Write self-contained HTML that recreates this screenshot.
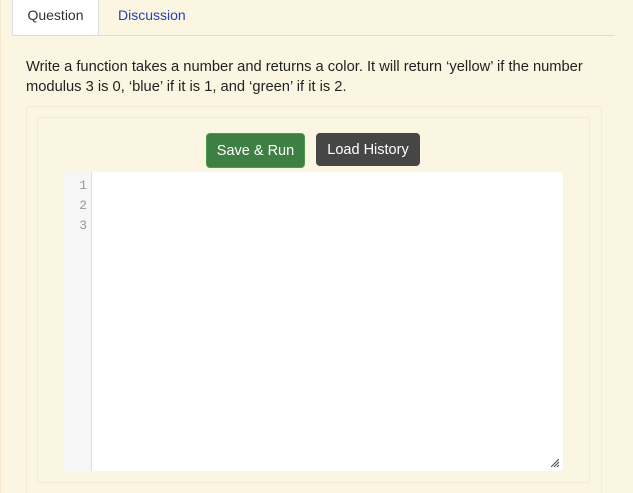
<!DOCTYPE html>
<html><head><style>
html,body{margin:0;width:633px;height:493px;overflow:hidden}
body{background:#fbf6e2;font-family:"Liberation Sans",sans-serif;position:relative}
.lb{position:absolute;left:0;top:0;width:1px;height:493px;background:#f5e8cc}
.tabline{position:absolute;left:12px;top:35px;width:603px;height:1px;background:#ddd}
.tab1{position:absolute;left:12px;top:0;width:85px;height:35px;background:#fff;border:1px solid #ddd;border-top:none;border-bottom:none;font-size:14px;color:#333;line-height:31px;text-align:center}
.tab2{position:absolute;left:118px;top:0;font-size:14px;color:#2a3fb0;line-height:31px}
.q{position:absolute;left:26px;top:57px;font-size:14.7px;line-height:20px;color:#222;width:575px}
.p1{position:absolute;left:26px;top:106px;width:574px;height:395px;border:1px solid #f6ead0;border-radius:4px}
.p2{position:absolute;left:37px;top:117px;width:551px;height:364px;border:1px solid #f6ead0;border-radius:4px;background:#faf6e2}
.b{position:absolute;top:133px;height:33px;border-radius:4px;color:#fff;font-size:14.5px;line-height:34px;text-align:center}
.ed{position:absolute;left:64px;top:172px;width:499px;height:299px;background:#fff;border-radius:0 3px 3px 0}
.gut{position:absolute;left:0;top:0;width:28px;height:299px;background:#f6f6f6;border-right:1px solid #ddd;font-family:"Liberation Mono",monospace;font-size:13px;color:#999;text-align:right;line-height:20px;box-sizing:border-box;padding:4px 4px 0 0}
</style></head><body>
<div class="lb"></div>
<div class="tabline"></div>
<div class="tab1">Question</div>
<div class="tab2">Discussion</div>
<div class="q">Write a function takes a number and returns a color. It will return ‘yellow’ if the number modulus 3 is 0, ‘blue’ if it is 1, and ‘green’ if it is 2.</div>
<div class="p1"></div>
<div class="p2"></div>
<div class="b" style="left:206px;width:97px;background:#3e7f42;border:1px solid #4a9b4e;">Save &amp; Run</div>
<div class="b" style="left:316px;width:104px;background:#464646;">Load History</div>
<div class="ed"><div class="gut">1<br>2<br>3</div>
<svg style="position:absolute;right:4px;bottom:4px" width="8" height="8"><path d="M8 0L0 8M8 3L3 8M8 6L6 8" stroke="#444" stroke-width="1"/></svg></div>
</body></html>
